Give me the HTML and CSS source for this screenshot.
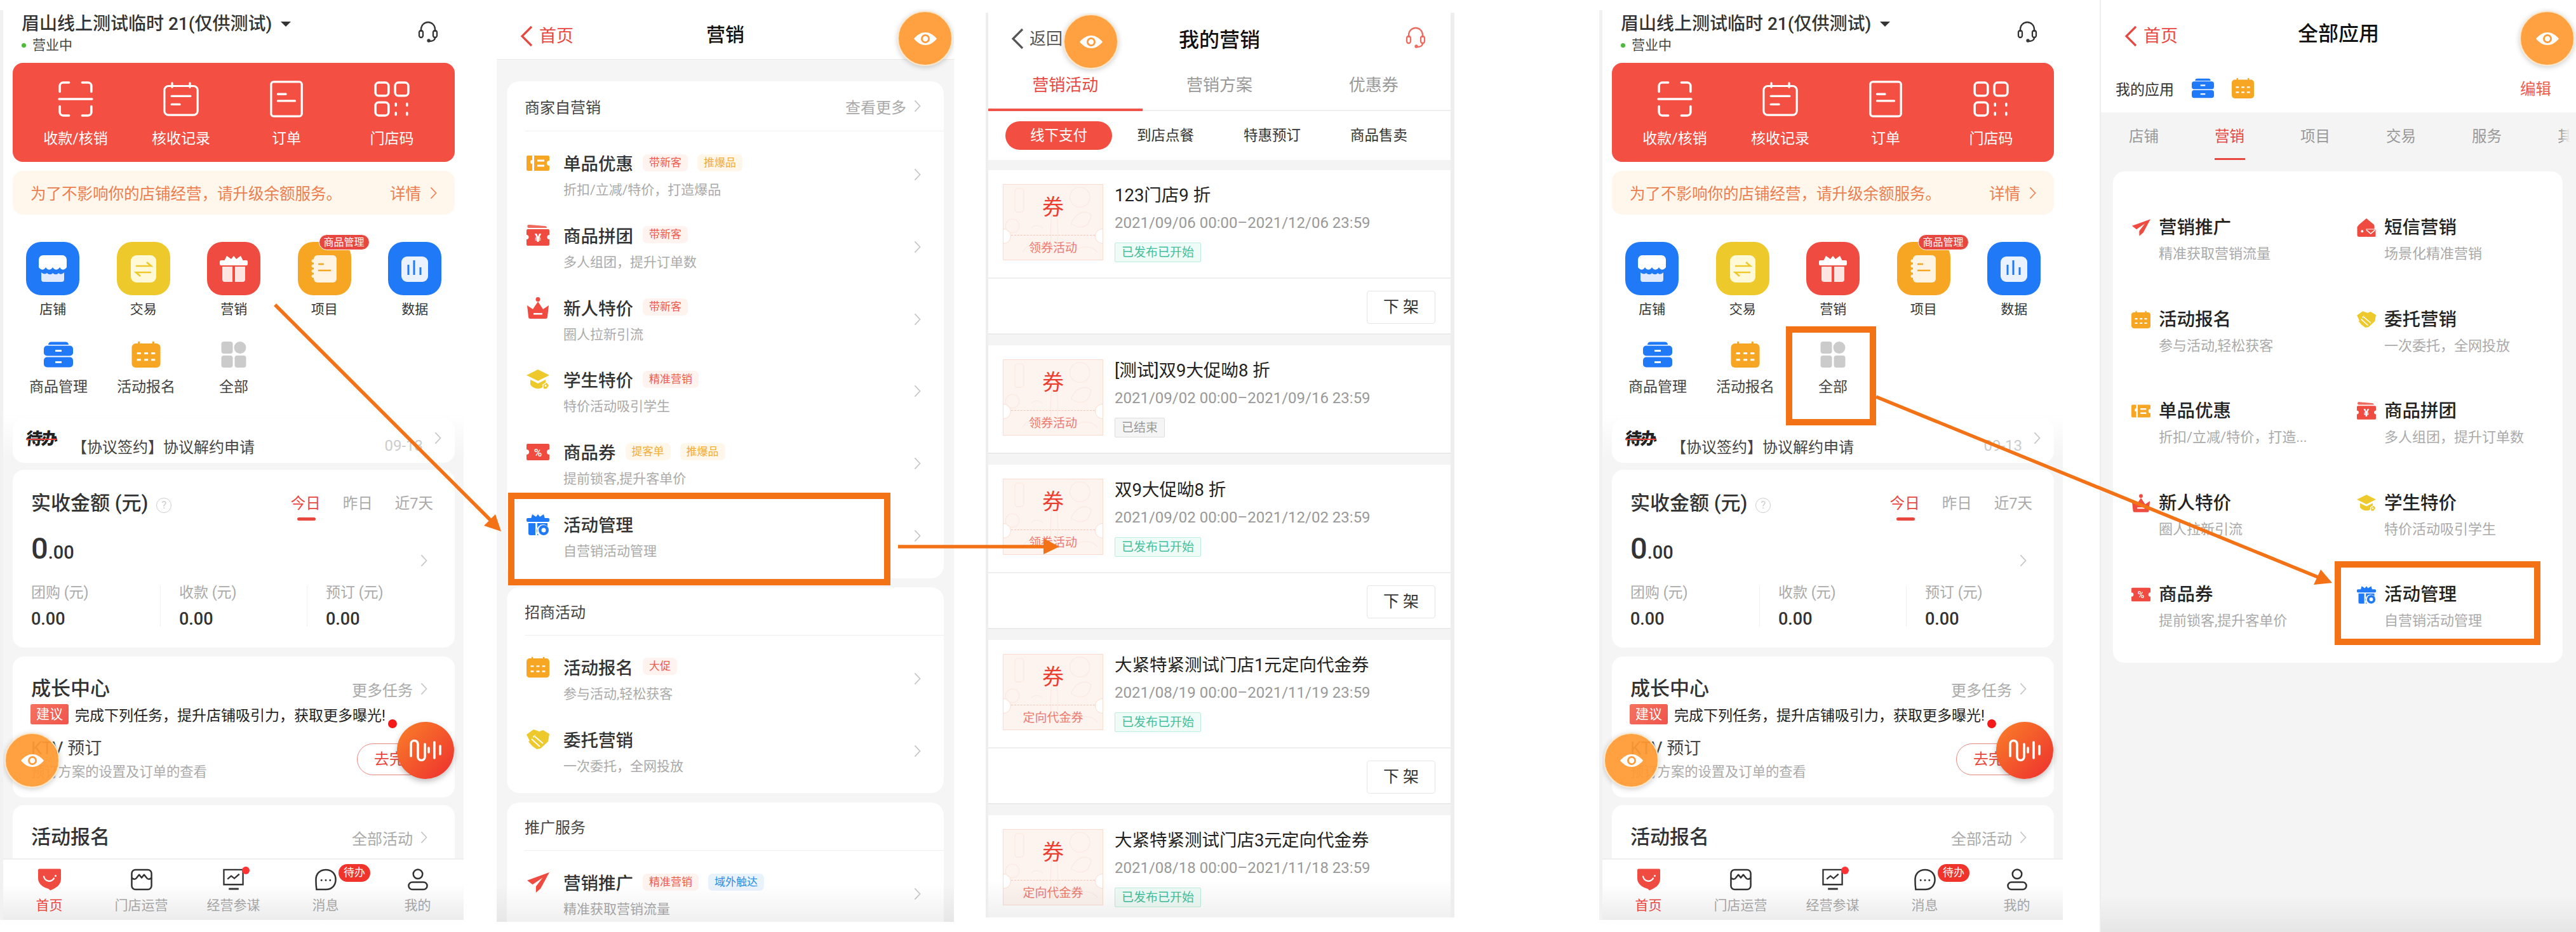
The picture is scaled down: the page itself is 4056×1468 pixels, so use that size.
FILE: index.html
```html
<!DOCTYPE html>
<html lang="zh-CN">
<head>
  <meta charset="UTF-8" />
  <title>营销活动操作路径</title>
  <link rel="stylesheet" href="styles.css">
</head>
<body>
  <svg class="defs" width="0" height="0">
    <symbol id="chev" viewBox="0 0 12 22"><path d="M1.5 1.5L10.5 11l-9 9.500" fill="none" stroke="currentColor" stroke-width="1.700"/></symbol>
    <symbol id="back" viewBox="0 0 20 34"><path d="M18 2L3 17l15 15" fill="none" stroke="currentColor" stroke-width="3.200"/></symbol>
    <symbol id="eye" viewBox="0 0 36 20"><path d="M0 10C6 3 12 0 18 0s12 3 18 10c-6 7-12 10-18 10S6 17 0 10z" fill="#fff"/><circle cx="18" cy="10" r="7" fill="#ff9b38"/><circle cx="18" cy="10" r="4.200" fill="#fff"/></symbol>
    <symbol id="headset" viewBox="0 0 32 36"><g fill="none" stroke="currentColor" stroke-width="2.300" stroke-linecap="round"><path d="M5 17v-3a11 11 0 0 1 22 0v3"/><rect x="2" y="16" width="6" height="11" rx="3"/><rect x="24" y="16" width="6" height="11" rx="3"/><path d="M27 27c0 4-4 6-9 6"/><circle cx="17" cy="32" r="1.500"/></g></symbol>
    <symbol id="wave" viewBox="0 0 50 36"><g fill="none" stroke="#fff" stroke-width="3.600" stroke-linecap="round"><path d="M2 27V8a5.500 5.500 0 0 1 11 0v20a5.500 5.500 0 0 0 11 0V8"/><path d="M30 14v7M39 5v25M48 11v13"/></g></symbol>
    <symbol id="scan" viewBox="0 0 54 56"><g fill="none" stroke="#fff" stroke-width="3.400" stroke-linecap="round"><path d="M3 17V8a5 5 0 0 1 5-5h9M37 3h9a5 5 0 0 1 5 5v9M3 39v9a5 5 0 0 0 5 5h9M37 53h9a5 5 0 0 0 5-5v-9M2 28h50"/></g></symbol>
    <symbol id="record" viewBox="0 0 60 58"><g fill="none" stroke="#fff" stroke-width="3.400" stroke-linecap="round"><rect x="2" y="7" width="56" height="49" rx="7"/><path d="M15 2v7M45 2v7M14 24h32M14 38h14"/></g></symbol>
    <symbol id="order" viewBox="0 0 54 60"><g fill="none" stroke="#fff" stroke-width="3.400" stroke-linecap="round"><rect x="2" y="2" width="50" height="56" rx="4"/><path d="M13 22h13M13 33h28"/></g></symbol>
    <symbol id="qr" viewBox="0 0 54 56"><g fill="none" stroke="#fff" stroke-width="3.400" stroke-linecap="round"><rect x="2" y="3" width="20" height="20" rx="5"/><rect x="32" y="3" width="20" height="20" rx="5"/><rect x="2" y="33" width="20" height="20" rx="5"/><path d="M33 35v3M33 49v3M50 35v3M50 49v3"/></g></symbol>
    <symbol id="g-store" viewBox="0 0 84 84"><rect width="84" height="84" rx="24" fill="#2079f6"/><path d="M27 21h30a7 7 0 0 1 7 7v12c-4 5-8 5-11 0-3 5-8 5-11 0-3 5-8 5-11 0-3 5-7 5-11 0V28a7 7 0 0 1 7-7z" fill="#fff"/><path d="M24 48c3 3 7 3 9 1 3 3 7 3 9 0 3 3 7 3 9 0 3 3 6 2 9-1v11a4 4 0 0 1-4 4H28a4 4 0 0 1-4-4z" fill="#dfeaff"/></symbol>
    <symbol id="g-swap" viewBox="0 0 84 84"><rect width="84" height="84" rx="24" fill="#eec92c"/><rect x="22" y="21" width="40" height="43" rx="9" fill="#fff9d8"/><path d="M30 38h24l-7-6M54 48H30l7 6" fill="none" stroke="#eec92c" stroke-width="2.600"/></symbol>
    <symbol id="g-gift" viewBox="0 0 84 84"><rect width="84" height="84" rx="24" fill="#ef4b40"/><g fill="#fff"><path d="M27 30l4-8 7 5 4-5 4 5 7-5 4 8z"/><rect x="20" y="29" width="44" height="8" rx="2"/><path d="M24 39h16v24H28a4 4 0 0 1-4-4z" fill="#fde6e2"/><path d="M44 39h16v20a4 4 0 0 1-4 4H44z" fill="#fde6e2"/></g></symbol>
    <symbol id="g-note" viewBox="0 0 84 84"><rect width="84" height="84" rx="24" fill="#f6a623"/><rect x="25" y="21" width="36" height="43" rx="6" fill="#fff4e2"/><g fill="#fff4e2"><circle cx="24" cy="30" r="2.500"/><circle cx="24" cy="38" r="2.500"/><circle cx="24" cy="46" r="2.500"/><circle cx="24" cy="54" r="2.500"/></g><path d="M32 35h9M32 45h20" stroke="#f6a623" stroke-width="2.600"/></symbol>
    <symbol id="g-chart" viewBox="0 0 84 84"><rect width="84" height="84" rx="24" fill="#2079f6"/><rect x="21" y="23" width="42" height="40" rx="9" fill="#eaf2ff"/><path d="M32 36v16M41 29v23M51 40v12" stroke="#2079f6" stroke-width="3"/></symbol>
    <symbol id="drawer" viewBox="0 0 46 40"><g fill="#2079f6"><path d="M7 4.500A4.500 4.500 0 0 1 11.500 0h23A4.500 4.500 0 0 1 39 4.500z"/><rect y="6" width="46" height="16" rx="5"/><rect y="24" width="46" height="16" rx="5"/></g><g fill="#fff"><rect x="18" y="12.500" width="10" height="3"/><rect x="18" y="30.500" width="10" height="3"/></g></symbol>
    <symbol id="cal" viewBox="0 0 44 40"><rect y="3" width="44" height="37" rx="6" fill="#f6a623"/><path d="M11 0v6M33 0v6" stroke="#f6a623" stroke-width="3"/><g stroke="#fff" stroke-width="3"><path d="M8 18h6M19 18h6M30 18h6M8 28h6M19 28h6M30 28h6"/></g></symbol>
    <symbol id="apps" viewBox="0 0 39 41"><g fill="#cbcbcb"><rect width="18" height="19" rx="4"/><circle cx="29.500" cy="9.500" r="9.500"/><rect y="22" width="18" height="19" rx="4"/><rect x="21" y="22" width="18" height="19" rx="4"/></g></symbol>
    <symbol id="i-ticket" viewBox="0 0 36 26"><path d="M2 1h7v7a3 3 0 0 0 0 6v11H2a2 2 0 0 1-2-2V3a2 2 0 0 1 2-2z" fill="#f6a623"/><path d="M12 1h22a2 2 0 0 1 2 2v6a4 4 0 0 0 0 8v6a2 2 0 0 1-2 2H12z" fill="#f6a623"/><path d="M17 9h11M17 17h11" stroke="#fff" stroke-width="3"/></symbol>
    <symbol id="i-yuan" viewBox="0 0 36 34"><path d="M5 0l24 2a3 3 0 0 1 3 3H3a2 2 0 0 1 2-5z" fill="#f0695d"/><path d="M2 7h32a2 2 0 0 1 2 2v7a3.500 3.500 0 0 0 0 7v8a2 2 0 0 1-2 2H2a2 2 0 0 1-2-2v-8a3.500 3.500 0 0 0 0-7V9a2 2 0 0 1 2-2z" fill="#ef4b40"/><text x="18" y="27" text-anchor="middle" font-size="19" font-weight="700" fill="#fff">¥</text></symbol>
    <symbol id="i-crown" viewBox="0 0 36 34"><path d="M1 13l9 6 8-12 8 12 9-6-2 18a3 3 0 0 1-3 3H6a3 3 0 0 1-3-3z" fill="#ef4b40"/><circle cx="18" cy="3.500" r="3.500" fill="#ef4b40"/><rect x="11" y="25" width="14" height="2.600" fill="#fff"/></symbol>
    <symbol id="i-cap" viewBox="0 0 36 32"><path d="M18 0l18 9-18 9L0 9z" fill="#eec92c"/><path d="M6 16l12 6 12-6v8c-3 4-7 6-12 6s-9-2-12-6z" fill="#eec92c"/><path d="M26 24l6-4 4 5-4 6h-6z" fill="#eec92c" stroke="#fff" stroke-width="1.500"/><circle cx="30" cy="25.500" r="1.500" fill="#fff"/></symbol>
    <symbol id="i-pct" viewBox="0 0 36 26"><path d="M2 0h32a2 2 0 0 1 2 2v7a4 4 0 0 0 0 8v7a2 2 0 0 1-2 2H2a2 2 0 0 1-2-2v-7a4 4 0 0 0 0-8V2a2 2 0 0 1 2-2z" fill="#ef4b40"/><text x="18" y="20" text-anchor="middle" font-size="17" font-weight="500" fill="#fff">%</text></symbol>
    <symbol id="i-event" viewBox="0 0 36 34"><g fill="#2079f6"><path d="M7 8l2-7 6 4 3-4 3 4 6-4 2 7z"/><rect y="7" width="36" height="6" rx="2"/><path d="M3 15h11v19H6a3 3 0 0 1-3-3z"/><path d="M17 15h16v5a9 9 0 0 0-14 14h-2z"/><circle cx="27" cy="26" r="8"/></g><circle cx="27" cy="26" r="3.500" fill="#fff"/></symbol>
    <symbol id="i-hands" viewBox="0 0 36 32"><path d="M0 8l11-8 9 3-10 8 2 5-5 6z" fill="#eec92c"/><path d="M15 5l11-4 10 6-2 12-12 11-6 1-7-5-6-7 7-4 4-7z" fill="#eec92c"/><path d="M8 15l13 12M13 11l13 11" stroke="#fff" stroke-width="1.800" fill="none"/></symbol>
    <symbol id="i-plane" viewBox="0 0 34 30"><path d="M34 0L1 12l8 6 15-10-10 13v9l7-6z" fill="#ef4b40"/></symbol>
    <symbol id="i-sms" viewBox="0 0 30 30"><path d="M15 0l11 9a4 4 0 0 1 2 4v4H14v13H3a3 3 0 0 1-3-3V14l3-4z" fill="#ef4b40"/><rect x="14" y="18" width="16" height="12" rx="1" fill="#ef4b40"/><path d="M15 19l7 6 7-6" fill="none" stroke="#fff" stroke-width="1.500"/><circle cx="8" cy="21" r="2" fill="#fff"/></symbol>
    <symbol id="t-home" viewBox="0 0 36 34"><path d="M2 0h32a2 2 0 0 1 2 2v14c0 10-9 15-17 18-2-3-4-3-7-4C5 27 0 22 0 15V2a2 2 0 0 1 2-2z" fill="#ef4b40"/><path d="M9 12c2 8 11 10 16 3" fill="none" stroke="#fff" stroke-width="2.200" stroke-linecap="round"/><circle cx="27.500" cy="11" r="1.500" fill="#fff"/></symbol>
    <symbol id="t-store" viewBox="0 0 36 36"><g fill="none" stroke="#333" stroke-width="2.600" stroke-linejoin="round"><rect x="2" y="2" width="32" height="32" rx="6"/><path d="M2 15c3 3 6 3 8 0l4-5 4 5 4-5 4 5c2 3 5 3 8 0"/></g></symbol>
    <symbol id="t-chart" viewBox="0 0 36 36"><g fill="none" stroke="#333" stroke-width="2.400"><path d="M2 2h31v24H2z"/><path d="M8 17l6-5 5 4 8-7"/><path d="M10 33h16" stroke-width="3"/></g></symbol>
    <symbol id="t-chat" viewBox="0 0 36 36"><path d="M18 2C8 2 2 9 2 18s1 16 1 16c5 0 10 0 15 0 10 0 16-7 16-16S28 2 18 2z" fill="none" stroke="#333" stroke-width="2.600"/><g fill="#333"><circle cx="11" cy="19" r="1.500"/><circle cx="18" cy="19" r="1.500"/><circle cx="25" cy="19" r="1.500"/></g></symbol>
    <symbol id="t-user" viewBox="0 0 34 36"><g fill="none" stroke="#333" stroke-width="2.600"><circle cx="17" cy="9" r="7.500"/><rect x="2" y="22" width="30" height="12" rx="6"/></g></symbol>
    <symbol id="doodle" viewBox="0 0 158 120"><g fill="none" stroke="#fbeae2" stroke-width="1.400"><rect x="18" y="6" width="14" height="38" rx="5"/><circle cx="14" cy="66" r="11"/><circle cx="122" cy="20" r="16"/><path d="M108 62c8-18 22-22 32-14-2 18-14 26-32 14zM110 110c12-14 30-14 40-2"/><path d="M78 44c-4 20-4 40 0 66M84 46c4 20 4 40 0 62"/><path d="M30 108c10-16 24-16 34 0M44 70c4-6 14-6 18 0"/></g></symbol>
  </svg>

  <main class="canvas">

    <section class="phone home home-a">
      <div class="home-top">
        <div class="shop">
          <div class="shop-info">
            <div class="shop-name">眉山线上测试临时 21(仅供测试)<i class="caret"></i></div>
            <div class="shop-state"><i class="dot"></i>营业中</div>
          </div>
          <svg class="ic-head"><use href="#headset"/></svg>
        </div>
        <div class="redcard">
          <div class="redcard-item"><svg><use href="#scan"/></svg><span>收款/核销</span></div>
          <div class="redcard-item"><svg><use href="#record"/></svg><span>核收记录</span></div>
          <div class="redcard-item"><svg><use href="#order"/></svg><span>订单</span></div>
          <div class="redcard-item"><svg><use href="#qr"/></svg><span>门店码</span></div>
        </div>
        <div class="notice"><span class="notice-text">为了不影响你的店铺经营，请升级余额服务。</span><span class="notice-more">详情</span><svg class="chev"><use href="#chev"/></svg></div>
        <div class="apps">
          <div class="app"><svg class="app-ic"><use href="#g-store"/></svg>店铺</div>
          <div class="app"><svg class="app-ic"><use href="#g-swap"/></svg>交易</div>
          <div class="app"><svg class="app-ic"><use href="#g-gift"/></svg>营销</div>
          <div class="app"><svg class="app-ic"><use href="#g-note"/></svg>项目<b class="app-badge">商品管理</b></div>
          <div class="app"><svg class="app-ic"><use href="#g-chart"/></svg>数据</div>
        </div>
        <div class="apps2">
          <div class="app2"><svg class="app2-ic"><use href="#drawer"/></svg>商品管理</div>
          <div class="app2"><svg class="app2-ic"><use href="#cal"/></svg>活动报名</div>
          <div class="app2"><svg class="app2-ic"><use href="#apps"/></svg>全部</div>
        </div>
      </div>
      <div class="home-body">
        <div class="todo card">
          <span class="todo-logo">待办</span>
          <span class="todo-text">【协议签约】协议解约申请</span>
          <span class="todo-date">09-13</span>
          <svg class="chev todo-chev"><use href="#chev"/></svg>
        </div>
        <div class="card stat">
          <div class="stat-head">
            <span class="h2">实收金额 (元)</span><span class="help">?</span>
            <div class="stat-tabs"><span class="on">今日</span><span>昨日</span><span>近7天</span></div>
          </div>
          <div class="amount"><span><b>0</b><em>.00</em></span><svg class="chev"><use href="#chev"/></svg></div>
          <div class="stat-cols">
            <div class="stat-col"><span>团购 (元)</span><b>0.00</b></div>
            <div class="stat-col"><span>收款 (元)</span><b>0.00</b></div>
            <div class="stat-col"><span>预订 (元)</span><b>0.00</b></div>
          </div>
        </div>
        <div class="card grow">
          <div class="card-head"><span class="h2">成长中心</span><span class="more">更多任务<svg class="chev"><use href="#chev"/></svg></span></div>
          <div class="tip"><span class="tip-tag">建议</span>完成下列任务，提升店铺吸引力，获取更多曝光!</div>
          <div class="task">
            <div><div class="task-name">KTV 预订</div><div class="task-sub">预订方案的设置及订单的查看</div></div>
            <span class="task-btn">去完成</span>
          </div>
        </div>
        <div class="card last">
          <div class="card-head"><span class="h2">活动报名</span><span class="more">全部活动<svg class="chev"><use href="#chev"/></svg></span></div>
        </div>
      </div>
      <i class="reddot"></i>
      <div class="fab"><svg><use href="#wave"/></svg></div>
      <div class="eye eye-home"><svg><use href="#eye"/></svg></div>
      <nav class="tabbar">
        <div class="tab on"><svg><use href="#t-home"/></svg>首页</div>
        <div class="tab"><svg><use href="#t-store"/></svg>门店运营</div>
        <div class="tab"><svg><use href="#t-chart"/></svg>经营参谋<i class="tab-dot"></i></div>
        <div class="tab"><svg><use href="#t-chat"/></svg>消息<b class="tab-badge">待办</b></div>
        <div class="tab"><svg><use href="#t-user"/></svg>我的</div>
      </nav>
    </section>

    <section class="phone market">
      <header class="nav">
        <span class="nav-back"><svg><use href="#back"/></svg>首页</span>
        <span class="nav-title">营销</span>
      </header>
      <div class="eye eye-market"><svg><use href="#eye"/></svg></div>
      <div class="block block-first">
        <div class="block-head tall"><span>商家自营销</span><span class="more">查看更多<svg class="chev"><use href="#chev"/></svg></span></div>
        <div class="item"><svg class="item-ic h26"><use href="#i-ticket"/></svg><div class="item-main"><div class="item-name">单品优惠<i class="tag">带新客</i><i class="tag tag-y">推爆品</i></div><div class="item-sub">折扣/立减/特价，打造爆品</div></div><svg class="chev"><use href="#chev"/></svg></div>
        <div class="item"><svg class="item-ic"><use href="#i-yuan"/></svg><div class="item-main"><div class="item-name">商品拼团<i class="tag">带新客</i></div><div class="item-sub">多人组团，提升订单数</div></div><svg class="chev"><use href="#chev"/></svg></div>
        <div class="item"><svg class="item-ic"><use href="#i-crown"/></svg><div class="item-main"><div class="item-name">新人特价<i class="tag">带新客</i></div><div class="item-sub">圈人拉新引流</div></div><svg class="chev"><use href="#chev"/></svg></div>
        <div class="item"><svg class="item-ic"><use href="#i-cap"/></svg><div class="item-main"><div class="item-name">学生特价<i class="tag">精准营销</i></div><div class="item-sub">特价活动吸引学生</div></div><svg class="chev"><use href="#chev"/></svg></div>
        <div class="item"><svg class="item-ic h26"><use href="#i-pct"/></svg><div class="item-main"><div class="item-name">商品券<i class="tag tag-y">提客单</i><i class="tag tag-y">推爆品</i></div><div class="item-sub">提前锁客,提升客单价</div></div><svg class="chev"><use href="#chev"/></svg></div>
        <div class="item"><svg class="item-ic"><use href="#i-event"/></svg><div class="item-main"><div class="item-name">活动管理</div><div class="item-sub">自营销活动管理</div></div><svg class="chev"><use href="#chev"/></svg></div>
      </div>
      <div class="block block-second">
        <div class="block-head"><span>招商活动</span></div>
        <div class="item"><svg class="item-ic"><use href="#cal"/></svg><div class="item-main"><div class="item-name">活动报名<i class="tag">大促</i></div><div class="item-sub">参与活动,轻松获客</div></div><svg class="chev"><use href="#chev"/></svg></div>
        <div class="item"><svg class="item-ic"><use href="#i-hands"/></svg><div class="item-main"><div class="item-name">委托营销</div><div class="item-sub">一次委托，全网投放</div></div><svg class="chev"><use href="#chev"/></svg></div>
      </div>
      <div class="block">
        <div class="block-head"><span>推广服务</span></div>
        <div class="item"><svg class="item-ic"><use href="#i-plane"/></svg><div class="item-main"><div class="item-name">营销推广<i class="tag">精准营销</i><i class="tag tag-b">域外触达</i></div><div class="item-sub">精准获取营销流量</div></div><svg class="chev"><use href="#chev"/></svg></div>
      </div>
    </section>

    <section class="phone mine">
      <header class="mine-nav">
        <span class="mine-back"><svg><use href="#back"/></svg>返回</span>
        <span class="mine-title">我的营销</span>
        <svg class="mine-head"><use href="#headset"/></svg>
      </header>
      <div class="eye eye-mine"><svg><use href="#eye"/></svg></div>
      <div class="mine-tabs"><span class="on">营销活动</span><span>营销方案</span><span>优惠券</span></div>
      <div class="pills"><span class="pill on">线下支付</span><span class="pill">到店点餐</span><span class="pill">特惠预订</span><span class="pill">商品售卖</span></div>
      <div class="promo">
        <div class="promo-main">
          <div class="coupon"><svg class="doodle"><use href="#doodle"/></svg><div class="coupon-top">券</div><div class="coupon-type">领券活动</div></div>
          <div><div class="promo-name">123门店9 折</div><div class="promo-date">2021/09/06 00:00–2021/12/06 23:59</div><span class="state">已发布已开始</span></div>
        </div>
        <div class="promo-foot"><span class="off">下 架</span></div>
      </div>
      <div class="promo">
        <div class="promo-main">
          <div class="coupon"><svg class="doodle"><use href="#doodle"/></svg><div class="coupon-top">券</div><div class="coupon-type">领券活动</div></div>
          <div><div class="promo-name">[测试]双9大促呦8 折</div><div class="promo-date">2021/09/02 00:00–2021/09/16 23:59</div><span class="state state-end">已结束</span></div>
        </div>
      </div>
      <div class="promo">
        <div class="promo-main">
          <div class="coupon"><svg class="doodle"><use href="#doodle"/></svg><div class="coupon-top">券</div><div class="coupon-type">领券活动</div></div>
          <div><div class="promo-name">双9大促呦8 折</div><div class="promo-date">2021/09/02 00:00–2021/12/02 23:59</div><span class="state">已发布已开始</span></div>
        </div>
        <div class="promo-foot"><span class="off">下 架</span></div>
      </div>
      <div class="promo">
        <div class="promo-main">
          <div class="coupon"><svg class="doodle"><use href="#doodle"/></svg><div class="coupon-top">券</div><div class="coupon-type">定向代金券</div></div>
          <div><div class="promo-name">大紧特紧测试门店1元定向代金券</div><div class="promo-date">2021/08/19 00:00–2021/11/19 23:59</div><span class="state">已发布已开始</span></div>
        </div>
        <div class="promo-foot"><span class="off">下 架</span></div>
      </div>
      <div class="promo">
        <div class="promo-main">
          <div class="coupon"><svg class="doodle"><use href="#doodle"/></svg><div class="coupon-top">券</div><div class="coupon-type">定向代金券</div></div>
          <div><div class="promo-name">大紧特紧测试门店3元定向代金券</div><div class="promo-date">2021/08/18 00:00–2021/11/18 23:59</div><span class="state">已发布已开始</span></div>
        </div>
      </div>
    </section>

    <section class="phone home home-b">
      <div class="home-top">
        <div class="shop">
          <div class="shop-info">
            <div class="shop-name">眉山线上测试临时 21(仅供测试)<i class="caret"></i></div>
            <div class="shop-state"><i class="dot"></i>营业中</div>
          </div>
          <svg class="ic-head"><use href="#headset"/></svg>
        </div>
        <div class="redcard">
          <div class="redcard-item"><svg><use href="#scan"/></svg><span>收款/核销</span></div>
          <div class="redcard-item"><svg><use href="#record"/></svg><span>核收记录</span></div>
          <div class="redcard-item"><svg><use href="#order"/></svg><span>订单</span></div>
          <div class="redcard-item"><svg><use href="#qr"/></svg><span>门店码</span></div>
        </div>
        <div class="notice"><span class="notice-text">为了不影响你的店铺经营，请升级余额服务。</span><span class="notice-more">详情</span><svg class="chev"><use href="#chev"/></svg></div>
        <div class="apps">
          <div class="app"><svg class="app-ic"><use href="#g-store"/></svg>店铺</div>
          <div class="app"><svg class="app-ic"><use href="#g-swap"/></svg>交易</div>
          <div class="app"><svg class="app-ic"><use href="#g-gift"/></svg>营销</div>
          <div class="app"><svg class="app-ic"><use href="#g-note"/></svg>项目<b class="app-badge">商品管理</b></div>
          <div class="app"><svg class="app-ic"><use href="#g-chart"/></svg>数据</div>
        </div>
        <div class="apps2">
          <div class="app2"><svg class="app2-ic"><use href="#drawer"/></svg>商品管理</div>
          <div class="app2"><svg class="app2-ic"><use href="#cal"/></svg>活动报名</div>
          <div class="app2"><svg class="app2-ic"><use href="#apps"/></svg>全部</div>
        </div>
      </div>
      <div class="home-body">
        <div class="todo card">
          <span class="todo-logo">待办</span>
          <span class="todo-text">【协议签约】协议解约申请</span>
          <span class="todo-date">09-13</span>
          <svg class="chev todo-chev"><use href="#chev"/></svg>
        </div>
        <div class="card stat">
          <div class="stat-head">
            <span class="h2">实收金额 (元)</span><span class="help">?</span>
            <div class="stat-tabs"><span class="on">今日</span><span>昨日</span><span>近7天</span></div>
          </div>
          <div class="amount"><span><b>0</b><em>.00</em></span><svg class="chev"><use href="#chev"/></svg></div>
          <div class="stat-cols">
            <div class="stat-col"><span>团购 (元)</span><b>0.00</b></div>
            <div class="stat-col"><span>收款 (元)</span><b>0.00</b></div>
            <div class="stat-col"><span>预订 (元)</span><b>0.00</b></div>
          </div>
        </div>
        <div class="card grow">
          <div class="card-head"><span class="h2">成长中心</span><span class="more">更多任务<svg class="chev"><use href="#chev"/></svg></span></div>
          <div class="tip"><span class="tip-tag">建议</span>完成下列任务，提升店铺吸引力，获取更多曝光!</div>
          <div class="task">
            <div><div class="task-name">KTV 预订</div><div class="task-sub">预订方案的设置及订单的查看</div></div>
            <span class="task-btn">去完成</span>
          </div>
        </div>
        <div class="card last">
          <div class="card-head"><span class="h2">活动报名</span><span class="more">全部活动<svg class="chev"><use href="#chev"/></svg></span></div>
        </div>
      </div>
      <i class="reddot"></i>
      <div class="fab"><svg><use href="#wave"/></svg></div>
      <div class="eye eye-home"><svg><use href="#eye"/></svg></div>
      <nav class="tabbar">
        <div class="tab on"><svg><use href="#t-home"/></svg>首页</div>
        <div class="tab"><svg><use href="#t-store"/></svg>门店运营</div>
        <div class="tab"><svg><use href="#t-chart"/></svg>经营参谋<i class="tab-dot"></i></div>
        <div class="tab"><svg><use href="#t-chat"/></svg>消息<b class="tab-badge">待办</b></div>
        <div class="tab"><svg><use href="#t-user"/></svg>我的</div>
      </nav>
    </section>

    <section class="phone all">
      <header class="nav all-nav">
        <span class="nav-back"><svg><use href="#back"/></svg>首页</span>
        <span class="nav-title">全部应用</span>
      </header>
      <div class="eye eye-all"><svg><use href="#eye"/></svg></div>
      <div class="myapps">
        <span>我的应用</span>
        <svg class="myapp"><use href="#drawer"/></svg>
        <svg class="myapp"><use href="#cal"/></svg>
        <span class="edit">编辑</span>
      </div>
      <div class="cats"><span>店铺</span><span class="on">营销</span><span>项目</span><span>交易</span><span>服务</span><span>其他</span></div>
      <div class="grid-card">
        <div class="gitem"><svg class="gitem-ic"><use href="#i-plane"/></svg><div><div class="gitem-name">营销推广</div><div class="gitem-sub">精准获取营销流量</div></div></div>
        <div class="gitem"><svg class="gitem-ic"><use href="#i-sms"/></svg><div><div class="gitem-name">短信营销</div><div class="gitem-sub">场景化精准营销</div></div></div>
        <div class="gitem"><svg class="gitem-ic"><use href="#cal"/></svg><div><div class="gitem-name">活动报名</div><div class="gitem-sub">参与活动,轻松获客</div></div></div>
        <div class="gitem"><svg class="gitem-ic"><use href="#i-hands"/></svg><div><div class="gitem-name">委托营销</div><div class="gitem-sub">一次委托，全网投放</div></div></div>
        <div class="gitem"><svg class="gitem-ic"><use href="#i-ticket"/></svg><div><div class="gitem-name">单品优惠</div><div class="gitem-sub">折扣/立减/特价，打造...</div></div></div>
        <div class="gitem"><svg class="gitem-ic"><use href="#i-yuan"/></svg><div><div class="gitem-name">商品拼团</div><div class="gitem-sub">多人组团，提升订单数</div></div></div>
        <div class="gitem"><svg class="gitem-ic"><use href="#i-crown"/></svg><div><div class="gitem-name">新人特价</div><div class="gitem-sub">圈人拉新引流</div></div></div>
        <div class="gitem"><svg class="gitem-ic"><use href="#i-cap"/></svg><div><div class="gitem-name">学生特价</div><div class="gitem-sub">特价活动吸引学生</div></div></div>
        <div class="gitem"><svg class="gitem-ic"><use href="#i-pct"/></svg><div><div class="gitem-name">商品券</div><div class="gitem-sub">提前锁客,提升客单价</div></div></div>
        <div class="gitem"><svg class="gitem-ic"><use href="#i-event"/></svg><div><div class="gitem-name">活动管理</div><div class="gitem-sub">自营销活动管理</div></div></div>
      </div>
    </section>

    <!-- annotations drawn over the screenshots -->
    <i class="mark mark-item"></i>
    <i class="mark mark-all"></i>
    <i class="mark mark-manage"></i>
    <svg class="arrows" viewBox="0 0 4056 1468">
      <g stroke="#f47216" stroke-width="5.500" fill="none">
        <path d="M433 480L774 821"/>
        <path d="M1414 861H1650"/>
        <path d="M2954 625L3652 910"/>
      </g>
      <g fill="#f47216">
        <path d="M789 837L762 828 780 810z"/>
        <path d="M1668 861L1643 848V873z"/>
        <path d="M3672 918L3643 921 3654 897z"/>
      </g>
    </svg>
  </main>
</body>
</html>
```
FILE: styles.css
```css
* {
  box-sizing: border-box;
}

body {
  margin: 0;
  background: #fff;
  font-family: Roboto, "Noto Sans CJK SC", sans-serif;
  color: #333;
}

i, em {
  font-style: normal;
}

.defs {
  display: none;
}

.canvas {
  position: relative;
  display: flex;
  align-items: flex-start;
  width: 4056px;
  height: 1468px;
  overflow: hidden;
}

.phone {
  position: relative;
  flex: none;
  overflow: hidden;
}

.chev {
  flex: none;
  width: 11px;
  height: 20px;
  color: #c4c4c4;
}

/* floating eye button */
.eye {
  position: absolute;
  z-index: 5;
  display: flex;
  align-items: center;
  justify-content: center;
  width: 87px;
  height: 87px;
  border: 2px solid #fde6c8;
  border-radius: 50%;
  background: rgba(255, 153, 51, 0.93);
  box-shadow: 0 2px 8px rgba(0, 0, 0, 0.2);
}

.eye svg {
  width: 36px;
  height: 20px;
}

.eye-home { left: 2px; top: 1138px; }
.eye-market { left: 631px; top: 3px; }
.eye-mine { left: 118px; top: 2px; }
.eye-all { left: 659px; top: 17px; }

/* home screen */
.home {
  display: flex;
  flex-direction: column;
  width: 730px;
  height: 1433px;
  margin-top: 16px;
  border-left: 5px solid #f1f1f1;
  background: #f5f5f5;
}

.home-b {
  margin-left: 228px;
}

.home-top {
  flex: none;
  height: 634px;
  padding-top: 4px;
  background: #fff;
}

.shop {
  display: flex;
  justify-content: space-between;
  height: 79px;
  padding: 0 40px 0 29px;
}

.shop-name {
  display: flex;
  align-items: center;
  height: 36px;
  font-size: 28px;
  font-weight: 500;
  line-height: 36px;
  color: #333;
}

.caret {
  margin-left: 14px;
  border-top: 8px solid #333;
  border-left: 8px solid transparent;
  border-right: 8px solid transparent;
}

.shop-state {
  display: flex;
  align-items: center;
  margin-top: 3px;
  font-size: 21px;
  line-height: 24px;
  color: #444;
}

.dot {
  width: 7px;
  height: 7px;
  margin-right: 10px;
  border-radius: 50%;
  background: #4cbb3a;
}

.ic-head {
  width: 32px;
  height: 36px;
  margin-top: 12px;
  color: #333;
}

.redcard {
  display: flex;
  width: 696px;
  height: 156px;
  margin-left: 15px;
  padding: 28px 16px 0;
  border-radius: 16px;
  background: #f34f43;
}

.redcard-item {
  display: flex;
  flex: 1;
  flex-direction: column;
  align-items: center;
  font-size: 23px;
  line-height: 30px;
  color: #fff;
}

.redcard-item svg {
  width: 56px;
  height: 58px;
  margin-bottom: 19px;
}

.notice {
  display: flex;
  align-items: center;
  width: 696px;
  height: 69px;
  margin: 14px 0 0 15px;
  padding: 0 28px;
  border-radius: 16px;
  background: #fff7ec;
  font-size: 24.500px;
  color: #ec7e4f;
}

.notice-text {
  flex: 1;
  white-space: nowrap;
}

.notice-more {
  margin-right: 14px;
}

.notice .chev {
  color: #ec7e4f;
}

.apps {
  display: flex;
  margin: 43px 0 0 7px;
}

.app {
  position: relative;
  display: flex;
  flex: none;
  flex-direction: column;
  align-items: center;
  width: 142.500px;
  font-size: 21px;
  line-height: 28px;
  color: #333;
}

.app-ic {
  width: 84px;
  height: 84px;
  margin-bottom: 8px;
}

.app-badge {
  position: absolute;
  top: -12px;
  left: 62px;
  width: 80px;
  height: 25px;
  border: 1px solid #fff;
  border-radius: 13px;
  background: #e8473f;
  font-size: 16px;
  font-weight: 400;
  line-height: 23px;
  text-align: center;
  color: #fff;
}

.apps2 {
  display: flex;
  margin: 37px 0 0 18px;
}

.app2 {
  display: flex;
  flex: none;
  flex-direction: column;
  align-items: center;
  width: 138px;
  font-size: 23px;
  line-height: 30px;
  color: #444;
}

.app2-ic {
  width: 46px;
  height: 41px;
  margin-bottom: 16px;
}

.home-body {
  flex: 1;
  min-height: 0;
  overflow: hidden;
  padding: 10px 14px 0 15px;
  background: linear-gradient(#fff, #f5f5f5 70px);
}

.card {
  background: #fff;
  border-radius: 18px;
}

.todo {
  display: flex;
  align-items: center;
  height: 69px;
  padding: 0 21px;
}

.todo-logo {
  width: 50px;
  margin-top: -7px;
  font-size: 26px;
  font-weight: 900;
  line-height: 30px;
  letter-spacing: -2px;
  color: #222;
  white-space: nowrap;
  transform: skewX(-6deg);
  text-decoration: line-through #e8473f 2px;
}

.todo-text {
  flex: 1;
  margin: 15px 0 0 22px;
  font-size: 24px;
  color: #444;
}

.todo-date {
  margin-top: 15px;
  font-size: 24px;
  color: #ccc;
}

.todo-chev {
  margin: -9px 0 0 18px;
}

.stat {
  height: 280px;
  margin-top: 11px;
  padding: 33px 29px 0;
}

.stat-head {
  display: flex;
  align-items: center;
  height: 40px;
}

.h2 {
  font-size: 31px;
  font-weight: 500;
  line-height: 40px;
  color: #333;
}

.help {
  display: block;
  width: 24px;
  height: 24px;
  margin: 6px 0 0 13px;
  border: 1.500px solid #ccc;
  border-radius: 50%;
  font-size: 16px;
  line-height: 21px;
  text-align: center;
  color: #ccc;
}

.stat-tabs {
  display: flex;
  gap: 35px;
  margin-left: auto;
  padding-right: 5px;
  font-size: 23.500px;
  line-height: 40px;
  color: #aaa;
}

.stat-tabs .on {
  position: relative;
  color: #e8473f;
}

.stat-tabs .on::after {
  content: "";
  position: absolute;
  left: 10px;
  right: 8px;
  top: 42px;
  height: 5px;
  border-radius: 3px;
  background: #e8473f;
}

.amount {
  display: flex;
  align-items: flex-end;
  justify-content: space-between;
  height: 80px;
  padding-right: 14px;
  line-height: 58px;
}

.amount span {
  height: 58px;
}

.amount b {
  font-size: 47px;
  font-weight: 500;
}

.amount em {
  font-size: 29px;
  font-weight: 500;
}

.stat-cols {
  display: flex;
  margin-top: 30px;
}

.stat-col {
  display: flex;
  flex: none;
  flex-direction: column;
  width: 231px;
  height: 64px;
  padding-left: 29px;
  border-left: 1px solid #f0f0f0;
  font-size: 23px;
  line-height: 30px;
  color: #aaa;
}

.stat-col:first-child {
  width: 203px;
  padding-left: 0;
  border-left: 0;
}

.stat-col span {
  margin-top: -4px;
}

.stat-col b {
  margin-top: 9px;
  font-size: 27px;
  font-weight: 500;
  line-height: 34px;
  color: #333;
}

.grow {
  height: 222px;
  margin-top: 14px;
  padding: 31px 29px 0;
}

.card-head {
  display: flex;
  align-items: center;
  justify-content: space-between;
  height: 40px;
}

.more {
  display: flex;
  align-items: center;
  gap: 12px;
  padding-right: 14px;
  font-size: 24px;
  color: #aaa;
}

.tip {
  display: flex;
  align-items: center;
  height: 32px;
  margin-top: 4px;
  font-size: 23px;
  color: #222;
  white-space: nowrap;
}

.tip-tag {
  width: 60px;
  height: 32px;
  margin: 0 10px 0 -1px;
  border-radius: 3px;
  background: linear-gradient(135deg, #f4735f, #f0544c);
  font-size: 21px;
  line-height: 32px;
  text-align: center;
  color: #fff;
}

.task {
  display: flex;
  align-items: flex-start;
  justify-content: space-between;
  margin-top: 20px;
}

.task-name {
  font-size: 27px;
  line-height: 36px;
  color: #444;
}

.task-sub {
  margin-top: 4px;
  font-size: 21.300px;
  line-height: 30px;
  color: #aaa;
}

.task-btn {
  flex: none;
  width: 125px;
  height: 50px;
  margin: 10px 0 0;
  padding-left: 26px;
  border: 1px solid #e8877f;
  border-radius: 25px;
  font-size: 24px;
  line-height: 48px;
  color: #e8473f;
}

.last {
  height: 120px;
  margin-top: 12px;
  padding: 31px 29px 0;
}

.reddot {
  position: absolute;
  left: 606px;
  top: 1117px;
  width: 14px;
  height: 14px;
  border-radius: 50%;
  background: #f41a1a;
}

.fab {
  position: absolute;
  z-index: 4;
  left: 620px;
  top: 1121px;
  display: flex;
  align-items: center;
  justify-content: center;
  width: 90px;
  height: 90px;
  border-radius: 50%;
  background: linear-gradient(135deg, #fa8028, #ed2f30);
  box-shadow: 0 4px 10px rgba(0, 0, 0, 0.25);
}

.fab svg {
  width: 50px;
  height: 36px;
}

.tabbar {
  display: flex;
  flex: none;
  height: 97px;
  padding-top: 14px;
  border-top: 2px solid #eee;
  background: linear-gradient(#fff 40%, #ececec);
}

.tab {
  position: relative;
  display: flex;
  flex: 1;
  flex-direction: column;
  align-items: center;
  font-size: 21px;
  line-height: 28px;
  color: #a5a5a5;
}

.tab svg {
  width: 36px;
  height: 35px;
  margin-bottom: 9px;
}

.tab.on {
  color: #e8473f;
}

.tab-dot {
  position: absolute;
  left: 86px;
  top: -3px;
  width: 12px;
  height: 12px;
  border-radius: 50%;
  background: #f33;
}

.tab-badge {
  position: absolute;
  left: 93px;
  top: -7px;
  width: 50px;
  height: 28px;
  border-radius: 14px;
  background: #f0342c;
  font-size: 17px;
  font-weight: 400;
  line-height: 27px;
  text-align: center;
  color: #fff;
}

/* marketing list */
.nav {
  display: flex;
  align-items: center;
  justify-content: center;
  position: relative;
  height: 80px;
  background: #fff;
  border-bottom: 1.500px solid #eaeaea;
}

.nav-back {
  position: absolute;
  left: 37px;
  top: 26px;
  display: flex;
  align-items: center;
  gap: 10px;
  font-size: 27px;
  line-height: 32px;
  color: #e8473f;
}

.nav-back svg {
  width: 20px;
  height: 34px;
}

.nav-title {
  margin-top: -4px;
  font-size: 30px;
  font-weight: 500;
  color: #111;
}

.market {
  width: 720px;
  height: 1438px;
  margin: 14px 0 0 52px;
  background: #f5f5f5;
}

.market::after, .mine::after, .all::after {
  content: "";
  position: absolute;
  left: 0;
  right: 0;
  bottom: 0;
  height: 60px;
  background: linear-gradient(rgba(0, 0, 0, 0), rgba(0, 0, 0, 0.06));
}

.block {
  width: 688px;
  margin: 15px 0 0 16px;
  padding-bottom: 21px;
  border-radius: 20px;
  background: #fff;
}

.block-first {
  margin-top: 34px;
}

.block-second {
  margin-top: 14px;
}

.block-head {
  display: flex;
  align-items: center;
  justify-content: space-between;
  height: 76px;
  margin-left: 28px;
  border-bottom: 1.500px solid #f0f0f0;
  font-size: 24px;
  color: #444;
}

.block-head.tall {
  height: 79px;
}

.block-head .more {
  padding-right: 36px;
}

.item {
  display: flex;
  align-items: flex-start;
  height: 113.800px;
  padding: 31px 36px 0 31px;
}

.item .chev {
  margin-top: 27px;
}

.item-ic {
  flex: none;
  width: 36px;
  height: 34px;
  margin: 2px 22px 0 0;
}

.item-ic.h26 {
  height: 26px;
  margin-top: 6px;
}

.item-main {
  flex: 1;
}

.item-name {
  display: flex;
  align-items: center;
  height: 36px;
  font-size: 27.500px;
  font-weight: 500;
  color: #333;
}

.item-sub {
  margin-top: 10px;
  font-size: 21px;
  line-height: 30px;
  color: #aaa;
}

.tag {
  height: 27px;
  margin-left: 15px;
  padding: 0 10px;
  border-radius: 7px;
  background: #fef3ef;
  font-size: 17px;
  font-weight: 400;
  line-height: 27px;
  color: #ef5a4e;
}

.tag-y {
  background: #fff7ea;
  color: #f5ac33;
}

.tag-b {
  background: #e9f3fd;
  color: #2d8ee8;
}

/* my marketing */
.mine {
  width: 738px;
  height: 1425px;
  margin: 20px 0 0 50px;
  border-left: 4px solid #eee;
  border-right: 6px solid #eee;
  background: #f4f4f4;
}

.mine-nav {
  position: relative;
  display: flex;
  align-items: center;
  justify-content: center;
  height: 80px;
  background: #fff;
}

.mine-back {
  position: absolute;
  left: 36px;
  top: 24px;
  display: flex;
  align-items: center;
  gap: 9px;
  font-size: 26px;
  line-height: 32px;
  color: #555;
}

.mine-back svg {
  width: 20px;
  height: 34px;
}

.mine-title {
  font-size: 32px;
  font-weight: 500;
  color: #111;
}

.mine-head {
  position: absolute;
  right: 39px;
  top: 21px;
  width: 32px;
  height: 36px;
  color: #ec6a60;
}

.mine-tabs {
  display: flex;
  height: 75px;
  padding-top: 16px;
  border-bottom: 2px solid #eee;
  background: #fff;
  font-size: 26px;
  line-height: 36px;
  color: #999;
}

.mine-tabs span {
  flex: 1;
  text-align: center;
}

.mine-tabs .on {
  height: 59px;
  border-bottom: 4px solid #f0524a;
  color: #e8473f;
}

.pills {
  display: flex;
  height: 77px;
  margin-bottom: 16px;
  padding: 16px 0 0 27px;
  background: #fff;
  font-size: 22.500px;
  color: #333;
}

.pill {
  width: 168px;
  height: 45px;
  border-radius: 23px;
  line-height: 45px;
  text-align: center;
}

.pill.on {
  background: #f24f42;
  color: #fff;
}

.promo {
  margin-bottom: 17px;
  border-bottom: 2px solid #eaeaea;
  background: #fff;
}

.promo-main {
  display: flex;
  gap: 18px;
  height: 169px;
  padding: 22px 0 0 23px;
}

.coupon {
  position: relative;
  flex: none;
  width: 158px;
  height: 120px;
  overflow: hidden;
  border: 1px solid #fbdccf;
  background: #fef4ef;
  text-align: center;
}

.coupon::before, .coupon::after {
  content: "";
  position: absolute;
  top: 69px;
  width: 22px;
  height: 22px;
  border: 1px solid #fbdccf;
  border-radius: 50%;
  background: #fff;
}

.coupon::before { left: -12px; }
.coupon::after { right: -12px; }

.doodle {
  position: absolute;
  left: 0;
  top: 0;
  width: 156px;
  height: 118px;
}

.coupon-top {
  position: relative;
  height: 80px;
  margin: 0 12px;
  padding-top: 10px;
  border-bottom: 1px dashed #f7c6b6;
  font-size: 34px;
  line-height: 50px;
  color: #ea3f30;
}

.coupon-type {
  position: relative;
  margin-top: 7px;
  font-size: 19px;
  line-height: 26px;
  color: #ee7a6e;
}

.promo-name {
  font-size: 27.500px;
  line-height: 36px;
  color: #222;
  white-space: nowrap;
}

.promo-date {
  margin-top: 10px;
  font-size: 24px;
  line-height: 30px;
  color: #999;
  white-space: nowrap;
}

.state {
  display: inline-block;
  height: 31px;
  margin-top: 16px;
  padding: 0 10px;
  border: 1px solid #bdeedc;
  border-radius: 2px;
  background: #effbf6;
  font-size: 19px;
  line-height: 29px;
  color: #3fbf9b;
}

.state-end {
  border-color: #ddd;
  background: #f5f5f5;
  color: #999;
}

.promo-foot {
  display: flex;
  justify-content: flex-end;
  height: 88px;
  padding: 19px 24px 0 0;
  border-top: 2px solid #eee;
}

.off {
  width: 108px;
  height: 52px;
  border: 1px solid #e5e5e5;
  border-radius: 4px;
  font-size: 25px;
  line-height: 50px;
  text-align: center;
  color: #333;
}

/* all apps */
.all {
  width: 750px;
  height: 1468px;
  margin-left: 58px;
  border-left: 2px solid #eee;
  background: #f4f4f4;
}

.all-nav {
  height: 100px;
  border-bottom: 0;
}

.all-nav .nav-back {
  left: 37px;
  top: 40px;
}

.all-nav .nav-title {
  margin: 0 0 -12px 0;
  transform: translateY(-6px);
  font-size: 32px;
}

.myapps {
  display: flex;
  align-items: center;
  height: 77px;
  padding: 0 39px 0 23px;
  background: #fff;
  font-size: 23px;
  color: #333;
}

.myapp {
  width: 35px;
  height: 32px;
  margin-left: 28px;
}

.edit {
  margin-left: auto;
  font-size: 24.500px;
  color: #ee5a4e;
}

.cats {
  position: relative;
  display: flex;
  height: 93px;
  font-size: 23.500px;
  color: #999;
}

.cats::after {
  content: "";
  position: absolute;
  right: 0;
  top: 0;
  width: 24px;
  height: 75px;
  background: linear-gradient(90deg, rgba(244, 244, 244, 0), #f4f4f4 60%);
}

.cats span {
  flex: none;
  width: 135px;
  height: 75px;
  padding-top: 21px;
  line-height: 34px;
  text-align: center;
}

.cats .on {
  position: relative;
  color: #e8473f;
}

.cats .on::after {
  content: "";
  position: absolute;
  left: 44px;
  top: 72px;
  width: 48px;
  height: 3px;
  background: #e8473f;
}

.grid-card {
  display: grid;
  grid-template-columns: 355px 1fr;
  align-content: start;
  row-gap: 69.500px;
  width: 708px;
  height: 774px;
  margin-left: 19px;
  padding: 70px 0 0 29px;
  border-radius: 18px;
  background: #fff;
}

.gitem {
  display: flex;
  gap: 13px;
  height: 75px;
}

.gitem-ic {
  flex: none;
  width: 30px;
  height: 29px;
  margin-top: 4px;
}

.gitem-name {
  font-size: 28.500px;
  font-weight: 500;
  line-height: 38px;
  color: #222;
}

.gitem-sub {
  margin-top: 7px;
  font-size: 22px;
  line-height: 30px;
  color: #aaa;
  white-space: nowrap;
}

/* orange annotations */
.mark {
  position: absolute;
  z-index: 8;
  border: 10px solid #f47216;
}

.mark-item { left: 800px; top: 776px; width: 602px; height: 146px; }
.mark-all { left: 2812px; top: 514px; width: 142px; height: 156px; }
.mark-manage { left: 3676px; top: 884px; width: 324px; height: 132px; }

.arrows {
  position: absolute;
  z-index: 9;
  left: 0;
  top: 0;
  width: 4056px;
  height: 1468px;
}
```
